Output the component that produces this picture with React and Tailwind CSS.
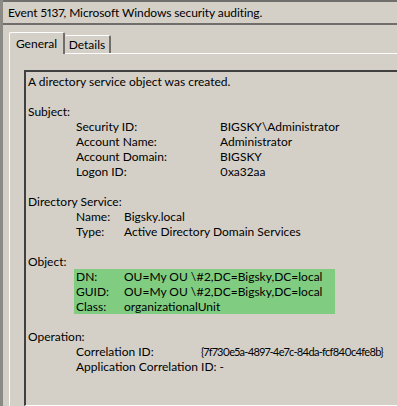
import React from 'react';

function Row({ label, value, w }) {
    return (
        <div className="flex h-[15px] items-center whitespace-nowrap">
            <span className={`${w} shrink-0`}>{label}</span>
            <span>{value}</span>
        </div>
    );
}

export default function App() {
    return (
        <div
            className="w-[397px] h-[406px] overflow-hidden bg-[#d4d0c8] text-[12px] leading-[15px] text-black proportional-nums flex flex-col border-l-[3px] border-[#8c8a85]"
            style={{ fontFamily: '"Lato", "Open Sans", sans-serif' }}
        >
            {/* header */}
            <div className="h-[25px] shrink-0 border-t-2 border-b-2 border-[#6f6e6a] flex items-center pl-[5px] whitespace-nowrap tracking-[-0.1px]">
                Event 5137, Microsoft Windows security auditing.
            </div>

            {/* tabs */}
            <div className="h-[28px] shrink-0 flex items-end pl-[6px]">
                <div className="h-[22px] w-[56px] border-t border-l border-white border-r-2 border-r-[#6f6e6a] rounded-t-[2px] flex items-center justify-center relative top-[1px] bg-[#d4d0c8] z-10">
                    General
                </div>
                <div className="h-[18px] w-[46px] border-t border-white border-r-2 border-r-[#6f6e6a] rounded-t-[2px] flex items-center justify-center">
                    Details
                </div>
            </div>

            {/* panel */}
            <div className="flex-1 ml-[6px] border-t border-l border-white pt-[16px] pl-[14px] flex flex-col">
                <div className="flex-1 border-t-2 border-l-2 border-[#404040] border-b border-b-white pt-[2px] pl-[2px]">
                    <div className="h-[15px]">A directory service object was created.</div>
                    <div className="h-[15px]" />
                    <div className="h-[15px]">Subject:</div>
                    <div className="pl-[48px]">
                        <Row label="Security ID:" value="BIGSKY\Administrator" w="w-[144px]" />
                        <Row label="Account Name:" value="Administrator" w="w-[144px]" />
                        <Row label="Account Domain:" value="BIGSKY" w="w-[144px]" />
                        <Row label="Logon ID:" value="0xa32aa" w="w-[144px]" />
                    </div>
                    <div className="h-[15px]" />
                    <div className="h-[15px]">Directory Service:</div>
                    <div className="pl-[48px]">
                        <Row label="Name:" value="Bigsky.local" w="w-[48px]" />
                        <Row label="Type:" value="Active Directory Domain Services" w="w-[48px]" />
                    </div>
                    <div className="h-[15px]" />
                    <div className="h-[15px]">Object:</div>
                    <div className="ml-[46px] w-[261px] pl-[2px] bg-[#80cc80]">
                        <Row label="DN:" value="OU=My OU \#2,DC=Bigsky,DC=local" w="w-[48px]" />
                        <Row label="GUID:" value="OU=My OU \#2,DC=Bigsky,DC=local" w="w-[48px]" />
                        <Row label="Class:" value="organizationalUnit" w="w-[48px]" />
                    </div>
                    <div className="h-[15px]" />
                    <div className="h-[15px]">Operation:</div>
                    <div className="pl-[48px]">
                        <div className="flex h-[15px] items-center whitespace-nowrap">
                            <span className="w-[125px] shrink-0">Correlation ID:</span>
                            <span className="text-[11px] tracking-[-0.7px]">{'{7f730e5a-4897-4e7c-84da-fcf840c4fe8b}'}</span>
                        </div>
                        <div className="h-[15px] whitespace-nowrap">Application Correlation ID: -</div>
                    </div>
                </div>
            </div>
        </div>
    );
}
